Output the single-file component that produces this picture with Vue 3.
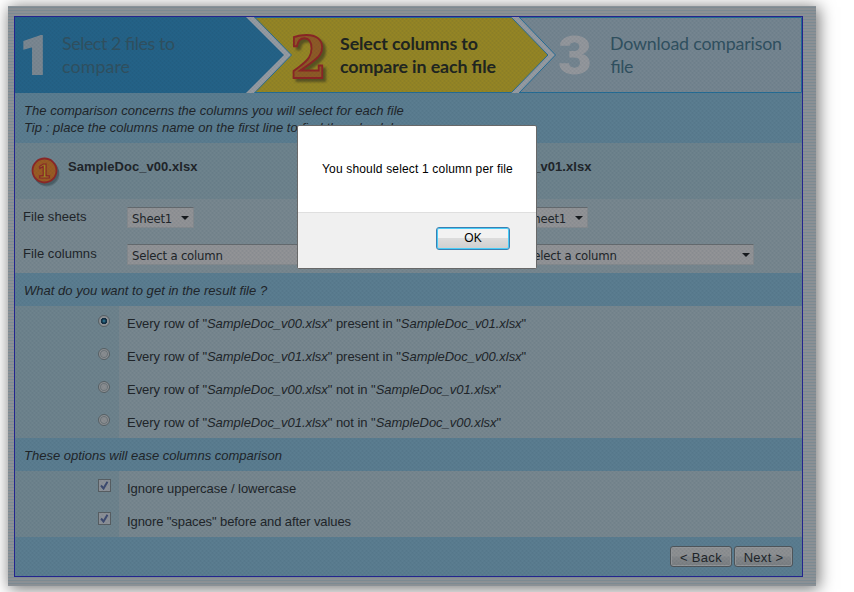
<script setup>
import { ref } from 'vue'

const files = [
  { name: 'SampleDoc_v00.xlsx', badge: '1' },
  { name: 'SampleDoc_v01.xlsx', badge: '2' },
]
const results = [
  { a: files[0].name, link: 'present in', b: files[1].name },
  { a: files[1].name, link: 'present in', b: files[0].name },
  { a: files[0].name, link: 'not in', b: files[1].name },
  { a: files[1].name, link: 'not in', b: files[0].name },
]
const options = [
  { label: 'Ignore uppercase / lowercase', cls: 'case' },
  { label: 'Ignore "spaces" before and after values', cls: 'spaces' },
]
const selected = ref(0)
</script>

<template>
  <div class="page">
    <div class="frame">
      <div class="panel">
        <svg class="steps" width="787" height="76" viewBox="0 0 787 76">
          <rect width="787" height="76" fill="#758590" />
          <path d="M0 .5H786.500V75.500H0" fill="none" stroke="#246c94" />
          <path d="M496 0H504L540.500 38L504 76H496Z" fill="#969ba2" />
          <path d="M504 0L540.500 38L504 76" fill="none" stroke="#246c94" />
          <path d="M239 .5H496.500L533 38L496.500 75.500H239Z" fill="#958524" stroke="#246c94" />
          <path d="M231 0H239L276.500 38L239 76H231Z" fill="#969ba2" />
          <path d="M239.500 0L276.500 38L239.500 76" fill="none" stroke="#246c94" />
          <path d="M0 0H231L269 38L231 76H0Z" fill="#246287" />
          <text x="5" y="57" class="num one" textLength="31" lengthAdjust="spacingAndGlyphs">1</text>
          <text x="275" y="61" class="num two" textLength="37" lengthAdjust="spacingAndGlyphs">2</text>
          <text x="543" y="57" class="num three" textLength="34" lengthAdjust="spacingAndGlyphs">3</text>
          <g class="caption">
            <text x="47" y="33" textLength="113">Select 2 files to</text>
            <text x="47" y="56" textLength="68">compare</text>
            <text x="595" y="33" textLength="172">Download comparison</text>
            <text x="595" y="56" textLength="23">file</text>
          </g>
          <g class="caption current">
            <text x="325" y="33" textLength="138">Select columns to</text>
            <text x="325" y="56" textLength="156">compare in each file</text>
          </g>
        </svg>

        <div class="intro">
          <div class="intro-one">The comparison concerns the columns you will select for each file</div>
          <div class="intro-two">Tip : place the columns name on the first line to find them back here</div>
        </div>

        <div class="files">
          <section v-for="file in files" :key="file.name" class="file">
            <header class="file-head">
              <svg width="34" height="34" viewBox="0 0 34 34">
                <circle cx="17" cy="18" r="12.500" fill="#26363d" opacity=".25" />
                <circle cx="16" cy="16.500" r="13" fill="#33434c" opacity=".4" />
                <circle cx="14.500" cy="14.500" r="12" fill="#9a5b22" stroke="#8c2626" stroke-width="1.800" />
                <text x="14" y="22" text-anchor="middle" class="badge">{{ file.badge }}</text>
              </svg>
              <span class="file-name">{{ file.name }}</span>
            </header>
            <div class="field sheets">
              <label><span class="lbl-sheets">File sheets</span></label>
              <div class="select small"><span>Sheet1</span><i class="arrow"></i></div>
            </div>
            <div class="field columns">
              <label><span class="lbl-cols">File columns</span></label>
              <div class="select"><span>Select a column</span><i class="arrow"></i></div>
            </div>
          </section>
        </div>

        <div class="section"><span class="title-result">What do you want to get in the result file ?</span></div>
        <div v-for="(row, i) in results" :key="i" class="row">
          <div class="control">
            <span class="radio" :class="{ on: selected === i }" @click="selected = i"></span>
          </div>
          <div class="text"><span class="result">Every row of "<em>{{ row.a }}</em>" {{ row.link }} "<em>{{ row.b }}</em>"</span></div>
        </div>

        <div class="section"><span class="title-options">These options will ease columns comparison</span></div>
        <div v-for="opt in options" :key="opt.label" class="row">
          <div class="control">
            <span class="check">
              <svg width="9" height="9" viewBox="0 0 9 9"><path d="M1 4.500L3.500 7.500L7.500 .8" fill="none" stroke="#3d4a70" stroke-width="2" /></svg>
            </span>
          </div>
          <div class="text"><span :class="opt.cls">{{ opt.label }}</span></div>
        </div>

        <footer class="footer">
          <button class="back">&lt; Back</button>
          <button class="next">Next &gt;</button>
        </footer>
        <div class="mesh"></div>
      </div>
    </div>

    <div class="dialog">
      <div class="message"><span>You should select 1 column per file</span></div>
      <div class="actions"><button class="ok">OK</button></div>
    </div>
  </div>
</template>

<style>
body {
  background: #fff;
  overflow: hidden;
}
</style>

<style scoped>
* {
  box-sizing: border-box;
}
.page {
  position: relative;
  width: 854px;
  height: 592px;
  padding: 6px 0 0 8px;
  overflow: hidden;
  font: 13px/17px "Liberation Sans", Arial, sans-serif;
  color: #202428;
}
.frame {
  width: 808px;
  height: 580px;
  padding: 10px 0 0 6px;
  background: repeating-linear-gradient(#8a9197 0 1px, #7c8a92 1px 2px, #8c8f92 2px 3px);
  box-shadow: 2px 2px 15px 1px #777;
}
.panel {
  position: relative;
  width: 789px;
  height: 561px;
  border: 1px solid #24248e;
  background: #5b7d90;
}
.mesh {
  position: absolute;
  inset: 0;
  pointer-events: none;
  background:
    repeating-linear-gradient(45deg, rgba(20, 50, 70, 0.035) 0 1.414px, transparent 1.414px 2.828px),
    repeating-linear-gradient(-45deg, rgba(20, 50, 70, 0.035) 0 1.414px, transparent 1.414px 2.828px);
}
.steps {
  display: block;
}
.num {
  font: 900 54px Roboto, sans-serif;
}
.one {
  fill: #7b8791;
  stroke: #7b8791;
  stroke-width: 2px;
}
.three {
  fill: #94979c;
}
.two {
  font: bold 58px "DejaVu Serif", serif;
  fill: #8e5a25;
  stroke: #8c2424;
  stroke-width: 2px;
  filter: drop-shadow(3px 3px 1px rgba(50, 50, 30, 0.6));
}
.caption {
  font: 17.800px Lato, sans-serif;
  fill: #30505f;
}
.current {
  font-weight: bold;
  fill: #20241f;
}
.intro {
  height: 50px;
  padding: 9px 9px 0;
  font-style: italic;
  letter-spacing: 0.030px;
  white-space: nowrap;
}
.files {
  display: flex;
  height: 130px;
}
.file {
  width: 394px;
  background: #78878f;
}
.file:last-child {
  width: 393px;
}
.file-head {
  display: flex;
  height: 56px;
  padding: 13px 0 0 15px;
  gap: 4px;
  background: #6e838d;
}
.file-name {
  padding-top: 2px;
  font-weight: bold;
  letter-spacing: 0.050px;
}
.badge {
  font: bold 21px "Liberation Sans", sans-serif;
  fill: #a08c20;
  stroke: #8c2626;
  stroke-width: 1.200px;
}
.field {
  display: flex;
  padding-left: 8px;
}
.field label {
  width: 104px;
  padding-top: 1px;
  letter-spacing: 0.060px;
}
.sheets {
  height: 37px;
  padding-top: 8px;
}
.columns {
  padding-top: 8px;
}
.select {
  display: flex;
  align-items: center;
  justify-content: space-between;
  width: 233px;
  height: 21px;
  padding: 1px 3px 0 4px;
  border: 1px solid #858a8e;
  border-top-color: #656a6e;
  background: #929396;
  font: 13px/17px "DejaVu Sans Condensed", "DejaVu Sans", sans-serif;
  font-stretch: condensed;
  letter-spacing: -0.200px;
}
.select.small {
  width: 67px;
  padding-right: 4px;
}
.arrow {
  border: 4px solid transparent;
  border-top-color: #16191c;
  border-bottom: 0;
}
.section {
  height: 33px;
  padding: 9px 9px 0;
  font-style: italic;
  background: #5b7d90;
}
.title-result {
  letter-spacing: 0.025px;
}
.row {
  display: flex;
  height: 33px;
  background: #78878f;
}
.control {
  display: flex;
  justify-content: flex-end;
  width: 104px;
  padding: 8px 8px 0 0;
  background: #6e838d;
}
.text {
  padding: 9px 0 0 8px;
  white-space: nowrap;
}
.result {
  letter-spacing: -0.035px;
}
.case {
  letter-spacing: -0.050px;
}
.spaces {
  letter-spacing: -0.090px;
}
.radio {
  width: 12px;
  height: 12px;
  margin: 1px 1px 0 0;
  border: 1px solid #596165;
  border-radius: 50%;
  background: radial-gradient(circle, #8a8d90 0 35%, #70777b 50%, #8e9194 62%);
}
.radio.on {
  background: radial-gradient(circle at 50% 50%, #286b88 0 12%, #132f43 28% 42%, #8e9194 50%);
}
.check {
  width: 13px;
  height: 13px;
  padding: 1px;
  border: 1px solid #585e62;
  background: #8c9097;
}
.check svg {
  display: block;
}
.footer {
  display: flex;
  justify-content: flex-end;
  height: 39px;
  padding: 9px 9px 0 0;
  gap: 2px;
}
.footer button {
  height: 21px;
  padding: 1px 0 0;
  border: 1px solid #50565a;
  border-radius: 3px;
  background: linear-gradient(#8e9092 0 45%, #84878a 55%, #7b7f82);
  color: #202428;
  font: 13px/17px "Liberation Sans", Arial, sans-serif;
  letter-spacing: 0.3px;
  box-shadow: inset 0 0 0 1px #94979a;
}
.back {
  width: 62px;
}
.next {
  width: 59px;
}
.dialog {
  position: absolute;
  left: 297px;
  top: 125px;
  width: 240px;
  height: 144px;
  border: 1px solid #686868;
  border-radius: 2px;
  background: #fff;
  color: #000;
  font-size: 12px;
}
.message {
  height: 87px;
  padding: 35px 0 0 24px;
  border-bottom: 1px solid #dfdfdf;
  letter-spacing: 0.170px;
  white-space: nowrap;
}
.actions {
  display: flex;
  justify-content: flex-end;
  height: 55px;
  padding: 14px 26px 0 0;
  background: #f0f0f0;
}
.ok {
  width: 74px;
  height: 23px;
  padding: 0;
  border: 1px solid #3c7fb1;
  border-radius: 3px;
  background: linear-gradient(#f2f2f2 0 48%, #dcdcdc 50%, #cfcfcf);
  box-shadow: inset 0 0 0 1px #48cdf8;
  color: #000;
  font: 12px/17px "Liberation Sans", Arial, sans-serif;
}
</style>
